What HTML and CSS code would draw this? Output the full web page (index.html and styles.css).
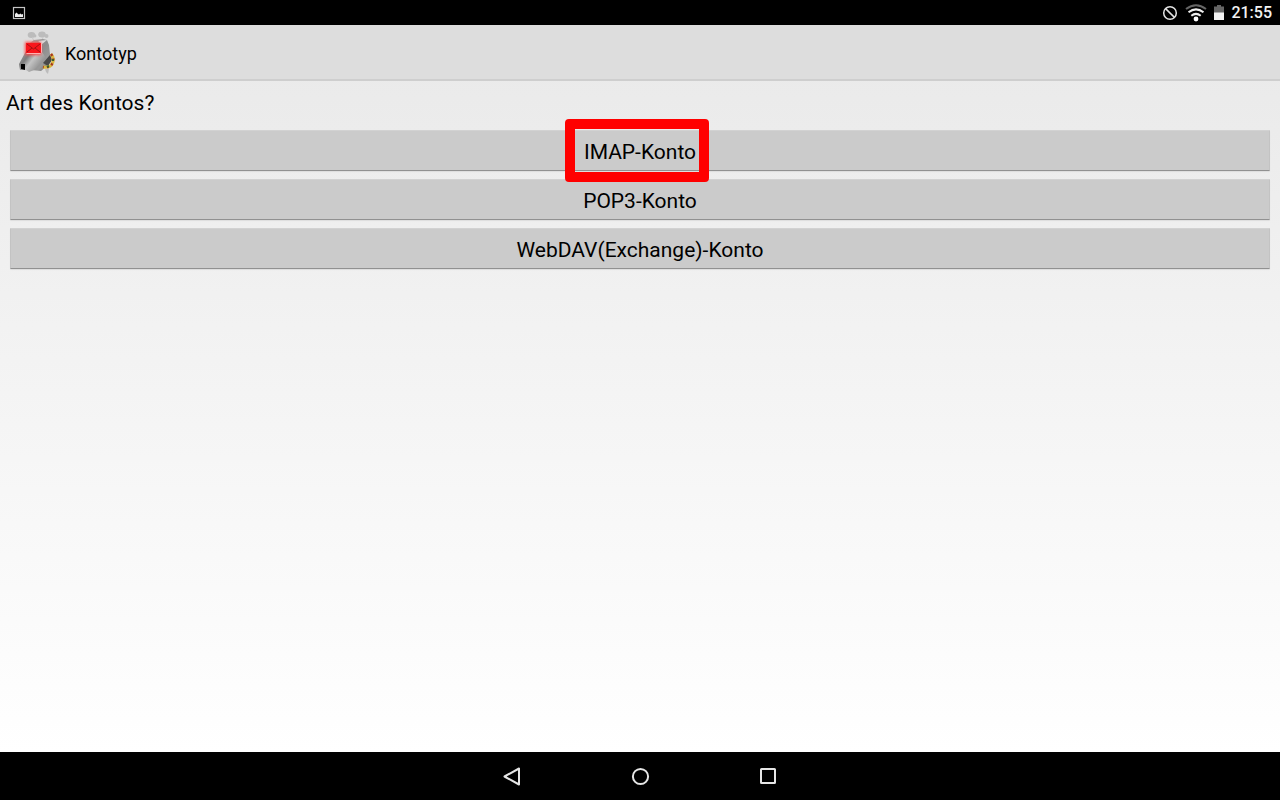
FILE: index.html
```html
<!DOCTYPE html>
<html lang="de">
<head>
<meta charset="utf-8">
<meta name="viewport" content="width=device-width, initial-scale=1">
<title>Kontotyp</title>
<link rel="stylesheet" href="styles.css">
</head>
<body>
<div class="screen">
  <div class="status-bar">
    <svg class="status-picture" width="14" height="14" viewBox="0 0 14 14" aria-hidden="true">
      <rect x="1.500" y="1.500" width="11" height="11" fill="none" stroke="#c4c4c4" stroke-width="1.200"/>
      <path d="M3 11V8L4.500 6.500L6 8L7 8.500L8.500 7.500L9.500 8.500L11 8V11Z" fill="#eee"/>
    </svg>
    <div class="status-right">
      <svg width="16" height="16" viewBox="0 0 16 16" aria-hidden="true">
        <g fill="none" stroke="#e4e4e4" stroke-width="1.500"><circle cx="8" cy="8" r="6.300"/><path d="M3.600 3.600L12.400 12.400"/></g>
      </svg>
      <svg width="22" height="18" viewBox="0 0 22 18" aria-hidden="true">
        <g fill="none" stroke-width="2">
          <path d="M1 5Q11-2.500 21 5" stroke="#666"/>
          <path d="M3.500 8.300Q11 2.500 18.500 8.300" stroke="#eee"/>
          <path d="M6.300 11.700Q11 8 15.700 11.700" stroke="#eee"/>
        </g>
        <circle cx="11" cy="15" r="2.400" fill="#fff"/>
      </svg>
      <svg class="battery" width="10" height="16" viewBox="0 0 10 16" aria-hidden="true">
        <path d="M0 1.500H3V0H7V1.500H10V8H0Z" fill="#666"/><path d="M0 7.500H10V15H0Z" fill="#f2f2f2"/>
      </svg>
      <span class="clock">21:55</span>
    </div>
  </div>

  <header class="action-bar">
    <svg class="app-icon" width="46" height="50" viewBox="0 0 46 50" aria-hidden="true">
      <defs>
        <linearGradient id="head" x1="0" y1="0" x2="1" y2="1">
          <stop offset="0" stop-color="#b0b0b0"/><stop offset="0.450" stop-color="#8c8c8c"/><stop offset="0.700" stop-color="#999"/><stop offset="1" stop-color="#5a5a5a"/>
        </linearGradient>
        <linearGradient id="snout" x1="0" y1="0" x2="1" y2="0.600">
          <stop offset="0" stop-color="#a8a8a8"/><stop offset="0.350" stop-color="#7c7c7c"/><stop offset="0.550" stop-color="#c4c4c4"/><stop offset="1" stop-color="#808080"/>
        </linearGradient>
        <filter id="glow" x="-40%" y="-40%" width="180%" height="180%"><feGaussianBlur stdDeviation="1.700"/></filter>
      </defs>
      <g fill="#bcbcbc">
        <ellipse cx="17.500" cy="7" rx="3.800" ry="3"/><ellipse cx="28" cy="6.500" rx="3.800" ry="3"/>
        <circle cx="21" cy="8" r="1.400"/><circle cx="32.500" cy="8" r="2"/>
        <path d="M18 9L20 13M29 9L28 13" stroke="#c8c8c8"/>
        <path d="M31 41L35 41L34 46L32 44Z"/>
      </g>
      <path d="M13 17L20 12L29 11L33 12L35 17L36 26L38 31L34 37L27 43L17 42Z" fill="url(#head)"/>
      <path d="M12 23L5 36L6 42L12 42L15 44L20 42L32 30L28 24Z" fill="url(#snout)"/>
      <path d="M24 13L33 12L28 16Z" fill="#ddd"/>
      <path d="M29 35L36 27L38 32L34 38Z" fill="#484848"/>
      <path d="M7 36H11V42L7 41Z" fill="#000"/>
      <path d="M37 26Q41 31 38 36Q36 40 29 39" fill="none" stroke="#d9b63f" stroke-width="3"/>
      <path d="M37 26Q41 31 38 36Q36 40 29 39" fill="none" stroke="#a63520" stroke-width="2.400" stroke-dasharray="2 3"/>
      <path d="M39 31L39 33M33 39L35 38" stroke="#38602c" stroke-width="2"/>
      <rect x="11" y="14" width="16" height="13" fill="#ff4545" filter="url(#glow)"/>
      <path d="M12 15H27V25H12Z" fill="#f8151c"/>
      <path d="M27 15L28 15L28 24L26 26L13 26L12 25H27Z" fill="#ffb0b0"/>
      <path d="M13 16L19.500 21L26 16M13 24L18 20M26 24L21 20" fill="none" stroke="#8d1010" stroke-width="0.800"/>
    </svg>
    <h1 class="title">Kontotyp</h1>
  </header>

  <main class="content">
    <p class="question">Art des Kontos?</p>
    <div class="choices">
      <button class="choice" type="button">IMAP-Konto<span class="highlight" aria-hidden="true"></span></button>
      <button class="choice" type="button">POP3-Konto</button>
      <button class="choice" type="button">WebDAV(Exchange)-Konto</button>
    </div>
  </main>

  <nav class="nav-bar">
    <button class="nav-button" type="button" aria-label="Zurück">
      <svg width="20" height="20" viewBox="0 0 20 20"><path d="M2.500 10.500L17 2.500V18.500Z" fill="none" stroke="#e6e6e6" stroke-width="2" stroke-linejoin="round"/></svg>
    </button>
    <button class="nav-button" type="button" aria-label="Startseite">
      <svg width="20" height="20" viewBox="0 0 20 20"><circle cx="10.500" cy="10.500" r="7.600" fill="none" stroke="#e6e6e6" stroke-width="2"/></svg>
    </button>
    <button class="nav-button" type="button" aria-label="Übersicht">
      <svg width="20" height="20" viewBox="0 0 20 20"><rect x="3" y="3" width="14" height="14" rx="0.500" fill="none" stroke="#e6e6e6" stroke-width="2"/></svg>
    </button>
  </nav>
</div>
</body>
</html>
```
FILE: styles.css
```css
* {
  box-sizing: border-box;
}

body {
  margin: 0;
  font-family: Roboto, "Noto Sans", sans-serif;
  color: #000;
}

svg {
  display: block;
}

.screen {
  display: flex;
  flex-direction: column;
  min-height: 100vh;
  background: linear-gradient(#e8e8e8, #fff 94%);
}

.status-bar {
  display: flex;
  align-items: center;
  justify-content: space-between;
  height: 25px;
  padding: 0 8px 0 12px;
  background: #000;
}

.status-right {
  display: flex;
  align-items: center;
  gap: 7px;
}

.clock {
  font-size: 16px;
  font-weight: 500;
  line-height: 24px;
  color: #f2f2f2;
}

.action-bar {
  display: flex;
  align-items: center;
  gap: 5px;
  height: 56px;
  padding: 2px 14px 0;
  background: #ddd;
  border-bottom: 2px solid #cecece;
}

.title {
  margin: 0;
  padding-top: 2px;
  font-size: 18px;
  font-weight: 400;
  line-height: 24px;
}

.content {
  flex: 1;
  padding: 6px;
}

.question {
  margin: 0;
  font-size: 21px;
  line-height: 32px;
}

.choices {
  display: flex;
  flex-direction: column;
  gap: 8px;
  padding: 11px 4px;
}

.choice {
  position: relative;
  height: 41px;
  padding: 2px 0 0;
  border: 1px solid #c3c3c3;
  border-top-color: #d2d2d2;
  border-bottom-color: #919191;
  border-radius: 1px;
  background: #cbcbcb;
  box-shadow: 0 1px 1px #ddd;
  font: inherit;
  font-size: 21px;
  line-height: 24px;
  color: #000;
}

.highlight {
  position: absolute;
  z-index: 1;
  top: -12px;
  left: calc(50% - 75px);
  width: 144px;
  height: 63px;
  border: 10px solid #f00;
  border-radius: 4px;
}

.nav-bar {
  display: flex;
  align-items: center;
  justify-content: center;
  height: 48px;
  background: #000;
}

.nav-button {
  display: flex;
  align-items: center;
  justify-content: center;
  width: 128px;
  height: 48px;
  padding: 0;
  border: 0;
  background: none;
}
```
